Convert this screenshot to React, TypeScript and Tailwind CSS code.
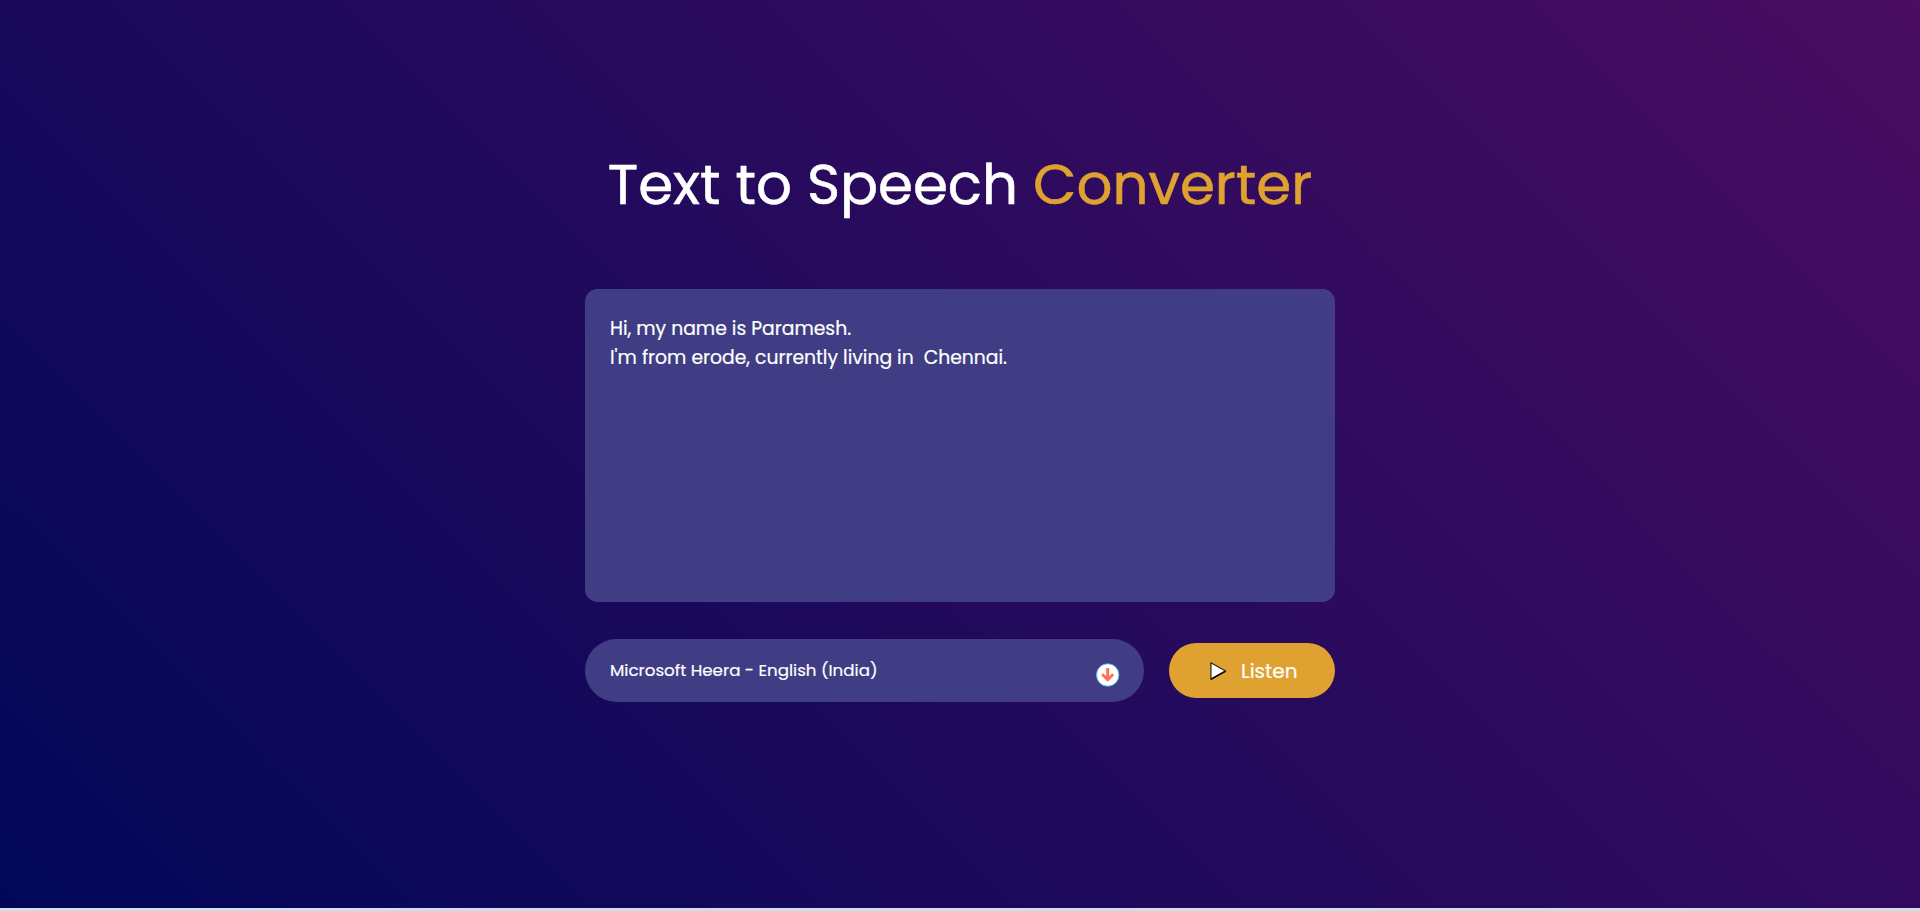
const FONT = "font-[Poppins,Inter,'Open_Sans',sans-serif]";

function DownBadge() {
  return (
    <svg viewBox="0 0 24 24" className="mt-[9px] size-6 shrink-0">
      <circle cx="11.7" cy="12" r="11.2" fill="#fff" stroke="#58b5dc" strokeWidth="0.8" />
      <path d="M11.7 5v12M6.2 11.2l5.5 5.5 5.5-5.5" fill="none" stroke="#ff7058" strokeWidth="3" />
    </svg>
  );
}

function PlayIcon() {
  return (
    <svg viewBox="0 0 18 20" className="h-5 w-[18px] shrink-0">
      <path d="M1.9 1.8v16.4L16.6 10z" fill="#fff" stroke="#3a2b14" strokeWidth="1.3" strokeLinejoin="round" />
      <path d="M2 18.2L16.4 10.3" stroke="#120d08" strokeWidth="1.6" />
    </svg>
  );
}

export default function App() {
  return (
    <div className={`flex h-[911px] w-full flex-col overflow-hidden bg-[#d0dfe8] text-white [-webkit-text-stroke:0.2px] ${FONT}`}>
      <main className="flex h-[908px] shrink-0 flex-col items-center bg-[linear-gradient(45deg,#010758,#490d61)]">
        <h1 className="mt-[151px] flex h-[68px] w-[750px] justify-center whitespace-pre text-[56.25px] leading-[68px] [-webkit-text-stroke:0.6px]">
          <span>Text to Speech </span>
          <span className="text-[#dfa231]">Converter</span>
        </h1>
        <div className="mt-[70px] h-[313px] w-[750px] whitespace-pre rounded-[12.5px] bg-[#403d84] px-[25px] pt-[25px] text-[18.75px] leading-[29px]">
          <p>Hi, my name is Paramesh.</p>
          <p>I'm from erode, currently living in  Chennai.</p>
        </div>
        <div className="mt-[37px] flex w-[750px] items-center justify-between">
          <div className="flex h-[63px] w-[559px] items-center justify-between rounded-full bg-[#403d84] pl-[25px] pr-6 text-[16.667px]">
            <span>Microsoft Heera - English (India)</span>
            <DownBadge />
          </div>
          <button className="flex h-[55px] w-[166px] items-center rounded-full bg-[#dfa231] pl-10 text-[20px]">
            <PlayIcon />
            <span className="ml-[14px] mt-px">Listen</span>
          </button>
        </div>
      </main>
    </div>
  );
}
